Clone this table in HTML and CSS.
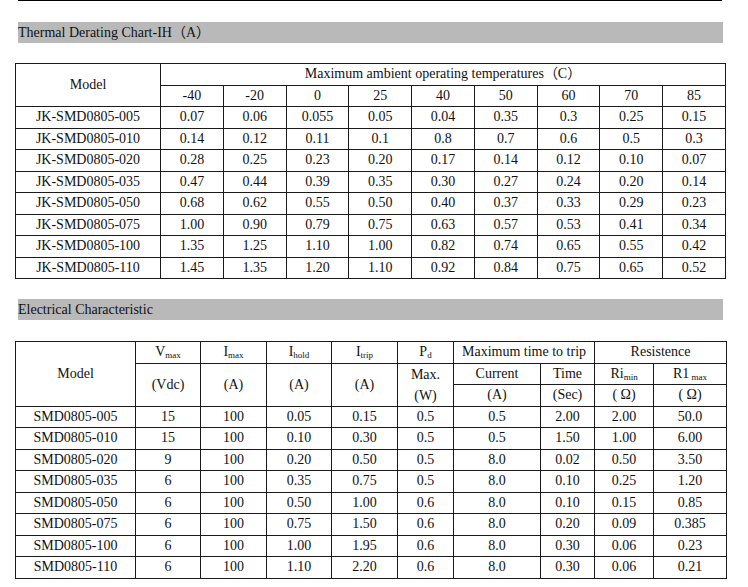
FILE: index.html
```html
<!DOCTYPE html>
<html>
<head>
<meta charset="utf-8">
<link rel="stylesheet" href="styles.css">
</head>
<body>
<div class="page">
  <div class="rule"></div>
  <div class="bar bar-first">Thermal Derating Chart-IH（A）</div>
  <table class="grid t1">
    <colgroup>
      <col class="c-model1">
      <col><col><col><col><col><col><col><col><col>
    </colgroup>
    <tr>
      <td rowspan="2">Model</td>
      <td colspan="9">Maximum ambient operating temperatures（C）</td>
    </tr>
    <tr><td>-40</td><td>-20</td><td>0</td><td>25</td><td>40</td><td>50</td><td>60</td><td>70</td><td>85</td></tr>
    <tr><td>JK-SMD0805-005</td><td>0.07</td><td>0.06</td><td>0.055</td><td>0.05</td><td>0.04</td><td>0.35</td><td>0.3</td><td>0.25</td><td>0.15</td></tr>
    <tr><td>JK-SMD0805-010</td><td>0.14</td><td>0.12</td><td>0.11</td><td>0.1</td><td>0.8</td><td>0.7</td><td>0.6</td><td>0.5</td><td>0.3</td></tr>
    <tr><td>JK-SMD0805-020</td><td>0.28</td><td>0.25</td><td>0.23</td><td>0.20</td><td>0.17</td><td>0.14</td><td>0.12</td><td>0.10</td><td>0.07</td></tr>
    <tr><td>JK-SMD0805-035</td><td>0.47</td><td>0.44</td><td>0.39</td><td>0.35</td><td>0.30</td><td>0.27</td><td>0.24</td><td>0.20</td><td>0.14</td></tr>
    <tr><td>JK-SMD0805-050</td><td>0.68</td><td>0.62</td><td>0.55</td><td>0.50</td><td>0.40</td><td>0.37</td><td>0.33</td><td>0.29</td><td>0.23</td></tr>
    <tr><td>JK-SMD0805-075</td><td>1.00</td><td>0.90</td><td>0.79</td><td>0.75</td><td>0.63</td><td>0.57</td><td>0.53</td><td>0.41</td><td>0.34</td></tr>
    <tr><td>JK-SMD0805-100</td><td>1.35</td><td>1.25</td><td>1.10</td><td>1.00</td><td>0.82</td><td>0.74</td><td>0.65</td><td>0.55</td><td>0.42</td></tr>
    <tr><td>JK-SMD0805-110</td><td>1.45</td><td>1.35</td><td>1.20</td><td>1.10</td><td>0.92</td><td>0.84</td><td>0.75</td><td>0.65</td><td>0.52</td></tr>
  </table>

  <div class="bar bar-second">Electrical Characteristic</div>
  <table class="grid t2">
    <colgroup>
      <col class="w120"><col class="w65"><col class="w66"><col class="w65"><col class="w66">
      <col class="w56"><col class="w87"><col class="w54"><col class="w59"><col class="w73">
    </colgroup>
    <tr>
      <td rowspan="3">Model</td>
      <td>V<sub>max</sub></td>
      <td>I<sub>max</sub></td>
      <td>I<sub>hold</sub></td>
      <td>I<sub>trip</sub></td>
      <td>P<sub>d</sub></td>
      <td colspan="2">Maximum time to trip</td>
      <td colspan="2">Resistence</td>
    </tr>
    <tr>
      <td rowspan="2">(Vdc)</td>
      <td rowspan="2">(A)</td>
      <td rowspan="2">(A)</td>
      <td rowspan="2">(A)</td>
      <td rowspan="2" class="stack"><span class="ln">Max.</span><span class="ln">(W)</span></td>
      <td>Current</td>
      <td>Time</td>
      <td>Ri<sub>min</sub></td>
      <td>R1<sub> max</sub></td>
    </tr>
    <tr><td>(A)</td><td>(Sec)</td><td>( Ω)</td><td>( Ω)</td></tr>
    <tr><td>SMD0805-005</td><td>15</td><td>100</td><td>0.05</td><td>0.15</td><td>0.5</td><td>0.5</td><td>2.00</td><td>2.00</td><td>50.0</td></tr>
    <tr><td>SMD0805-010</td><td>15</td><td>100</td><td>0.10</td><td>0.30</td><td>0.5</td><td>0.5</td><td>1.50</td><td>1.00</td><td>6.00</td></tr>
    <tr><td>SMD0805-020</td><td>9</td><td>100</td><td>0.20</td><td>0.50</td><td>0.5</td><td>8.0</td><td>0.02</td><td>0.50</td><td>3.50</td></tr>
    <tr><td>SMD0805-035</td><td>6</td><td>100</td><td>0.35</td><td>0.75</td><td>0.5</td><td>8.0</td><td>0.10</td><td>0.25</td><td>1.20</td></tr>
    <tr><td>SMD0805-050</td><td>6</td><td>100</td><td>0.50</td><td>1.00</td><td>0.6</td><td>8.0</td><td>0.10</td><td>0.15</td><td>0.85</td></tr>
    <tr><td>SMD0805-075</td><td>6</td><td>100</td><td>0.75</td><td>1.50</td><td>0.6</td><td>8.0</td><td>0.20</td><td>0.09</td><td>0.385</td></tr>
    <tr><td>SMD0805-100</td><td>6</td><td>100</td><td>1.00</td><td>1.95</td><td>0.6</td><td>8.0</td><td>0.30</td><td>0.06</td><td>0.23</td></tr>
    <tr><td>SMD0805-110</td><td>6</td><td>100</td><td>1.10</td><td>2.20</td><td>0.6</td><td>8.0</td><td>0.30</td><td>0.06</td><td>0.21</td></tr>
  </table>
</div>
</body>
</html>
```

FILE: styles.css
```css
html, body {
  margin: 0;
  padding: 0;
  background: #ffffff;
}

body {
  font-family: "Liberation Serif", "Noto Sans CJK SC", serif;
  font-size: 14px;
  color: #111111;
}

.page {
  padding: 0 0 0 15px;
  width: 711px;
}

.rule {
  margin-left: 3px;
  width: 704px;
  height: 1px;
  background: #000000;
}

.bar {
  margin-left: 3px;
  width: 705px;
  height: 21px;
  line-height: 21px;
  background: #b9b9b9;
  color: #111111;
  white-space: nowrap;
}

.bar-first {
  margin-top: 21px;
}

.bar-second {
  margin-top: 20px;
}

.grid {
  border-collapse: collapse;
  table-layout: fixed;
  width: 711px;
  font-family: "Liberation Serif", "Noto Sans CJK SC", serif;
  font-size: 14px;
}

.t1 {
  margin-top: 20px;
}

.t2 {
  margin-top: 21px;
}

.grid td {
  border: 1px solid #1a1a1a;
  padding: 0;
  height: 20.5px;
  text-align: center;
  vertical-align: middle;
  white-space: nowrap;
  line-height: 16px;
  font-family: "Liberation Serif", "Noto Sans CJK SC", serif;
  color: #111111;
}

.c-model1 { width: 145px; }

.w120 { width: 120px; }
.w65 { width: 65px; }
.w66 { width: 66px; }
.w56 { width: 56px; }
.w87 { width: 87px; }
.w54 { width: 54px; }
.w59 { width: 59px; }
.w73 { width: 73px; }

.grid sub {
  font-size: 9px;
  vertical-align: -2px;
  line-height: 0;
}

.stack .ln {
  display: block;
  line-height: 21px;
}
```
